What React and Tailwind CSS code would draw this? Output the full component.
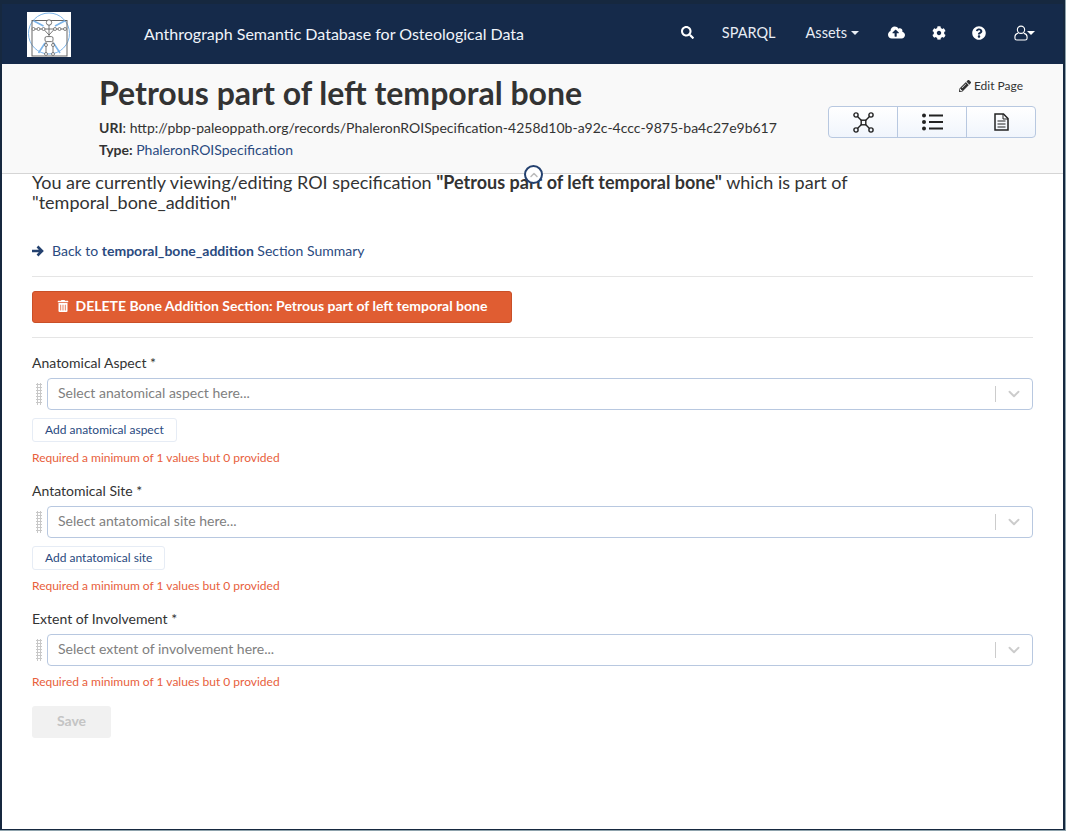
import { ChevronDown, ChevronUp } from 'lucide-react';
import { FaSearch, FaCloudUploadAlt, FaCog, FaQuestionCircle, FaPencilAlt, FaTrashAlt } from 'react-icons/fa';

function Logo() {
  return (
    <div className="w-[44px] h-[45px] bg-white">
      <svg viewBox="0 0 44 45" width="44" height="45" fill="none">
        <circle cx="22" cy="21.5" r="20.5" stroke="#7db4e8" strokeWidth="1" />
        <rect x="5" y="8.5" width="35" height="35.5" stroke="#666" strokeWidth="1" />
        <path d="M6.5 8.7l10 5.3M38 8.7l-10 5.3M11.5 41l6.5-10M33 41l-6.5-10" stroke="#7db4e8" strokeWidth="1.6" />
        <circle cx="22" cy="10.5" r="2.7" fill="#fff" stroke="#555" strokeWidth="0.8" />
        <path d="M6.5 17h31.5M16.5 17L22 23l5.5-6M22 13v12M19 29.6v12.4M26 29.6v12.4" stroke="#555" strokeWidth="0.8" />
        <rect x="18" y="24.6" width="8" height="5" rx="1.5" fill="#fff" stroke="#555" strokeWidth="0.8" />
        <g fill="#fff" stroke="#555" strokeWidth="0.7">
          <circle cx="6.5" cy="17" r="1.5" />
          <circle cx="11.5" cy="17" r="1.5" />
          <circle cx="16.5" cy="17" r="1.5" />
          <circle cx="28" cy="17" r="1.5" />
          <circle cx="32.5" cy="17" r="1.5" />
          <circle cx="38" cy="17" r="1.5" />
          <circle cx="19" cy="33" r="1.5" />
          <circle cx="26" cy="33" r="1.5" />
          <circle cx="19" cy="42" r="1.5" />
          <circle cx="26" cy="42" r="1.5" />
        </g>
      </svg>
    </div>
  );
}

function UserOutline() {
  return (
    <svg viewBox="0 0 15 17" width="14" height="16" fill="none" stroke="#fff" strokeWidth="1.2">
      <circle cx="7.5" cy="5" r="3.9" />
      <path d="M4.6 8.6C2.4 9.2 1 10.6 1 12.6V14c0 1.2 .8 2 2 2h9c1.2 0 2-.8 2-2v-1.4c0-2-1.4-3.4-3.6-4" />
    </svg>
  );
}

function GraphIcon() {
  return (
    <svg viewBox="0 0 21 21" width="21" height="21" fill="none" stroke="#222" strokeWidth="1.4">
      <rect x="8.2" y="8.2" width="4.6" height="4.6" />
      <circle cx="3" cy="3" r="2.1" />
      <circle cx="18" cy="3" r="2.1" />
      <circle cx="3" cy="18" r="2.1" />
      <circle cx="18" cy="18" r="2.1" />
      <path d="M4.5 4.5l3.7 3.7M16.5 4.5l-3.7 3.7M4.5 16.5l3.7-3.7M16.5 16.5l-3.7-3.7" />
    </svg>
  );
}

function ListIcon() {
  return (
    <svg viewBox="0 0 21 18" width="21" height="18" fill="#222">
      <circle cx="2" cy="2.5" r="2" />
      <circle cx="2" cy="9" r="2" />
      <circle cx="2" cy="15.5" r="2" />
      <rect x="7" y="1.5" width="14" height="2" />
      <rect x="7" y="8" width="14" height="2" />
      <rect x="7" y="14.5" width="14" height="2" />
    </svg>
  );
}

function DocIcon() {
  return (
    <svg viewBox="0 0 15 18" width="15" height="18" fill="none" stroke="#222" strokeWidth="1.5">
      <path d="M1 1h8.5L14 5.5V17H1z" />
      <path d="M9 1v5h5" strokeWidth="1" />
      <path d="M3.5 8h8M3.5 11h8M3.5 14h8" strokeWidth="1.1" />
    </svg>
  );
}

function Field({ label, placeholder, addLabel }) {
  return (
    <div className="mb-[13px]">
      <div className="text-[14px] leading-[21px] text-[#333] mb-[5px]">{label} *</div>
      <div className="flex items-center">
        <div className="w-[15px] h-[22px] pl-[4px]">
          <div className="w-[6px] h-[22px] bg-[radial-gradient(#c8c8c8_1px,transparent_1.1px)] bg-[length:3px_3px]" />
        </div>
        <div className="flex-1 h-[32px] flex items-center border border-[#b8c8e0] rounded-[4px] bg-white">
          <span className="flex-1 pl-[10px] pb-[3px] text-[14px] text-[#808080]">{placeholder}</span>
          <div className="w-px h-[16px] bg-[#ccc]" />
          <div className="w-[36px] flex justify-center">
            <ChevronDown size={18} strokeWidth={2.5} className="text-[#ccc]" />
          </div>
        </div>
      </div>
      {addLabel && (
        <button className="block mt-[8px] h-[24px] px-[12px] border border-[#e6ecf5] rounded-[3px] bg-white text-[12px] text-[#2a4a80]">
          {addLabel}
        </button>
      )}
      <div className="mt-[7px] text-[12px] leading-[18px] text-[#e8603c]">Required a minimum of 1 values but 0 provided</div>
    </div>
  );
}

export default function App() {
  return (
    <div className="w-[1066px] h-[831px] bg-[#8fa3ad] pr-[1px] pb-[1px] font-['Lato',sans-serif] overflow-hidden">
      <div className="h-full bg-[#16283f] pt-[4px] pl-[2px] pr-[2px] pb-[1px]">
        <div className="h-full bg-white flex flex-col">
          {/* Navbar */}
          <div className="h-[60px] bg-[#152a4a] flex items-center text-white shrink-0">
            <div className="ml-[25px]"><Logo /></div>
            <span className="ml-[73px] text-[16px] text-[#f0f4fa]">Anthrograph Semantic Database for Osteological Data</span>
            <div className="ml-auto mr-[28px] pb-[3px] flex items-center text-[14.5px] text-[#e8edf5]">
              <FaSearch size={13} className="text-white" />
              <span className="ml-[28px]">SPARQL</span>
              <span className="ml-[30px] flex items-center">
                Assets
                <span className="ml-[4px] w-0 h-0 border-x-[4px] border-x-transparent border-t-[4px] border-t-[#e8edf5]" />
              </span>
              <FaCloudUploadAlt size={17} className="ml-[29px] text-white" />
              <FaCog size={14} className="ml-[27px] text-white" />
              <FaQuestionCircle size={14} className="ml-[26px] text-white" />
              <span className="ml-[28px] flex items-center">
                <UserOutline />
                <span className="ml-[-1px] w-0 h-0 border-x-[4px] border-x-transparent border-t-[4px] border-t-white" />
              </span>
            </div>
          </div>

          {/* Page header */}
          <div className="relative h-[110px] bg-[#f9f9f9] border-b border-[#d5d5d5] shrink-0 flex pl-[97px]">
            <div>
              <h1 className="mt-[9px] text-[32px] leading-[40px] font-bold text-[#333]">Petrous part of left temporal bone</h1>
              <div className="mt-[4px] text-[14px] leading-[21px] text-[#333]">
                <b>URI</b>: http://pbp-paleoppath.org/records/PhaleronROISpecification-4258d10b-a92c-4ccc-9875-ba4c27e9b617
              </div>
              <div className="mt-[1px] text-[14px] leading-[21px] text-[#333]">
                <b>Type:</b> <span className="text-[#2a4a80]">PhaleronROISpecification</span>
              </div>
            </div>
            <div className="ml-auto mr-[27px] w-[208px] flex flex-col items-end">
              <div className="mt-[13px] mr-[13px] flex items-center gap-[3px] text-[12px] text-[#333]">
                <FaPencilAlt size={12} />
                Edit Page
              </div>
              <div className="mt-[11px] w-[208px] h-[32px] flex border border-[#b8c8e0] rounded-[4px] bg-gradient-to-b from-white to-[#f0f5fc]">
                <div className="flex-1 flex items-center justify-center border-r border-[#b8c8e0]"><GraphIcon /></div>
                <div className="flex-1 flex items-center justify-center border-r border-[#b8c8e0]"><ListIcon /></div>
                <div className="flex-1 flex items-center justify-center"><DocIcon /></div>
              </div>
            </div>
            <div className="absolute left-[522px] top-[101px] w-[19px] h-[19px] rounded-full border-2 border-[#24416f] bg-white flex items-center justify-center">
              <ChevronUp size={12} strokeWidth={3} className="text-[#bbb]" />
            </div>
          </div>

          {/* Content */}
          <div className="px-[30px] flex-1">
            <p className="mt-[-2px] text-[18px] leading-[20px] text-[#333]">
              You are currently viewing/editing ROI specification <b>"Petrous part of left temporal bone"</b> which is part of
              <br />
              <span>"temporal_bone_addition"</span>
            </p>
            <div className="mt-[28px] flex items-center text-[14px] leading-[21px] text-[#2a4a80]">
              <svg viewBox="0 0 12 12" width="12" height="12" fill="none" stroke="#24416f" strokeWidth="2.6" className="mr-[8px]">
                <path d="M0 6h9.5M5.5 1.5L10 6l-4.5 4.5" />
              </svg>
              <span>Back to <b>temporal_bone_addition</b> Section Summary</span>
            </div>
            <div className="mt-[15px] h-px bg-[#e5e5e5]" />
            <button className="mt-[14px] w-[480px] h-[32px] pb-[3px] flex items-center justify-center gap-[7px] bg-[#e05d32] border border-[#c94f27] rounded-[3px] text-[14px] font-bold text-white">
              <FaTrashAlt size={12} />
              DELETE Bone Addition Section: Petrous part of left temporal bone
            </button>
            <div className="mt-[14px] h-px bg-[#e5e5e5]" />
            <div className="mt-[14px]">
              <Field label="Anatomical Aspect" placeholder="Select anatomical aspect here..." addLabel="Add anatomical aspect" />
              <Field label="Antatomical Site" placeholder="Select antatomical site here..." addLabel="Add antatomical site" />
              <Field label="Extent of Involvement" placeholder="Select extent of involvement here..." />
            </div>
            <button className="mt-[2px] w-[79px] h-[32px] pb-[3px] bg-[#f1f1f1] rounded-[3px] text-[14px] font-bold text-[#c4c4c4]">Save</button>
          </div>
        </div>
      </div>
    </div>
  );
}
